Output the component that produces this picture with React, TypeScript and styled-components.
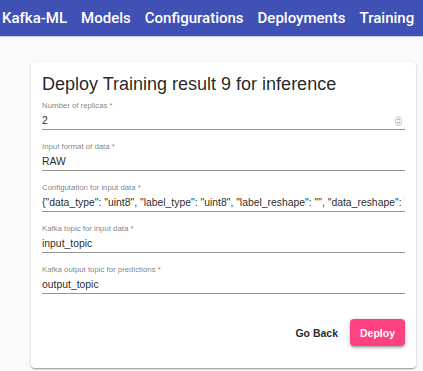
import styled, { createGlobalStyle } from 'styled-components'

const GlobalStyle = createGlobalStyle`
  html, body {
    margin: 0;
    padding: 0;
    background: #fafafa;
    font-family: 'Liberation Sans', Arial, Helvetica, sans-serif;
    -webkit-font-smoothing: antialiased;
  }
`

const navItems = ['Kafka-ML', 'Models', 'Configurations', 'Deployments', 'Training']

interface FieldProps {
  label: string
  value: string
  spinner?: boolean
}

const Field = ({ label, value, spinner }: FieldProps) => (
  <FieldWrapper>
    <FieldLabel>{label} *</FieldLabel>
    <FieldInput>
      <FieldValue>{value}</FieldValue>
      {spinner && (
        <Spinner>
          <svg width="7" height="10" viewBox="0 0 7 10">
            <rect x="0.5" y="0.5" width="6" height="9" rx="3" fill="#f4f4f4" stroke="#d0d0d0" />
            <path d="M2 4 L3.5 2.5 L5 4" fill="none" stroke="#888" strokeWidth="0.8" />
            <path d="M2 6 L3.5 7.5 L5 6" fill="none" stroke="#888" strokeWidth="0.8" />
          </svg>
        </Spinner>
      )}
    </FieldInput>
  </FieldWrapper>
)

export default function App() {
  return (
    <>
      <GlobalStyle />
      <AppBar>
        {navItems.map((item) => (
          <NavItem key={item}>{item}</NavItem>
        ))}
      </AppBar>
      <Main>
        <Card>
          <Title>Deploy Training result 9 for inference</Title>
          <Field label="Number of replicas" value="2" spinner />
          <Field label="Input format of data" value="RAW" />
          <Field
            label="Configutation for input data"
            value={'{"data_type": "uint8", "label_type": "uint8", "label_reshape": "", "data_reshape": "28 28"}'}
          />
          <Field label="Kafka topic for input data" value="input_topic" />
          <Field label="Kafka output topic for predictions" value="output_topic" />
          <Actions>
            <TextButton>Go Back</TextButton>
            <PrimaryButton>Deploy</PrimaryButton>
          </Actions>
        </Card>
      </Main>
    </>
  )
}

const AppBar = styled.header`
  display: flex;
  align-items: center;
  column-gap: 14px;
  height: 36px;
  padding-left: 2px;
  background-color: #3f51b5;
  box-shadow: 0 1px 0 #c5cae9;
  white-space: nowrap;
  overflow: hidden;
`

const NavItem = styled.span`
  color: #ffffff;
  font-family: Roboto, 'Liberation Sans', Arial, sans-serif;
  font-size: 15px;
  font-weight: 500;
`

const Main = styled.main`
  padding: 26px 7px 3px 31px;
`

const Card = styled.section`
  display: flex;
  flex-direction: column;
  padding: 11px 11px 22px 11px;
  background-color: #ffffff;
  border-radius: 4px;
  box-shadow: 0 1px 3px rgba(0, 0, 0, 0.2), 0 1px 1px rgba(0, 0, 0, 0.14), 0 2px 1px -1px rgba(0, 0, 0, 0.12);
`

const Title = styled.h2`
  margin: 0 0 6px 0;
  color: rgba(0, 0, 0, 0.87);
  font-size: 18px;
  font-weight: 400;
  line-height: 22px;
`

const FieldWrapper = styled.div`
  display: flex;
  flex-direction: column;
  margin-bottom: 12px;
`

const FieldLabel = styled.label`
  color: rgba(0, 0, 0, 0.54);
  font-size: 7.8px;
  line-height: 10px;
`

const FieldInput = styled.div`
  display: flex;
  align-items: center;
  padding-top: 3px;
  padding-bottom: 2px;
  border-bottom: 1px solid rgba(0, 0, 0, 0.42);
`

const FieldValue = styled.span`
  flex: 1;
  overflow: hidden;
  color: rgba(0, 0, 0, 0.87);
  font-size: 10.4px;
  line-height: 13px;
  white-space: nowrap;
`

const Spinner = styled.span`
  display: flex;
  margin-right: 3px;
`

const Actions = styled.div`
  display: flex;
  justify-content: flex-end;
  align-items: center;
  column-gap: 12px;
  margin-top: 13px;
`

const TextButton = styled.button`
  padding: 6px 0;
  border: none;
  background: transparent;
  color: rgba(0, 0, 0, 0.87);
  font-family: inherit;
  font-size: 10.5px;
  font-weight: 700;
`

const PrimaryButton = styled.button`
  width: 55px;
  height: 27px;
  border: none;
  border-radius: 4px;
  background-color: #ff4081;
  color: #ffffff;
  font-family: inherit;
  font-size: 10.5px;
  font-weight: 700;
  box-shadow: 0 1px 5px rgba(0, 0, 0, 0.2), 0 2px 2px rgba(0, 0, 0, 0.14), 0 3px 1px -2px rgba(0, 0, 0, 0.12);
`
